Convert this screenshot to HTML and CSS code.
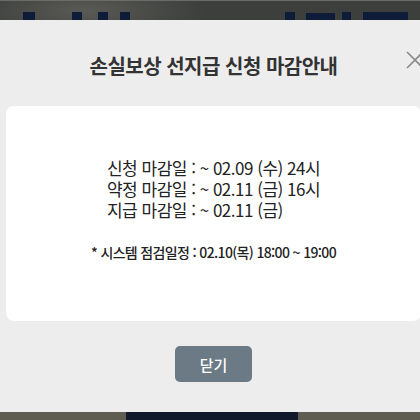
FILE: index.html
```html
<!DOCTYPE html>
<html lang="ko">
<head>
    <meta charset="UTF-8">
    <meta name="viewport" content="width=device-width, initial-scale=1.0">
    <title>손실보상 선지급 신청 마감안내</title>
    <link rel="stylesheet" href="styles.css">
</head>
<body>
    <div class="page">
        <div class="page-top">
            <span class="mark" style="margin-left:23px;width:12px"></span>
            <span class="mark" style="margin-left:37px;width:10px"></span>
            <span class="mark" style="margin-left:16px;width:10px"></span>
            <span class="mark" style="margin-left:12px;width:10px"></span>
            <span class="mark" style="margin-left:155px;width:10px"></span>
            <span class="mark low" style="margin-left:11px;width:29px"></span>
            <span class="mark" style="margin-left:7px;width:9px"></span>
            <span class="mark" style="margin-left:12px;width:45px"></span>
        </div>

        <div class="modal">
            <div class="modal-head">
                <h2>손실보상 선지급 신청 마감안내</h2>
                <button class="close" aria-label="닫기">
                    <svg width="18" height="18" viewBox="0 0 18 18">
                        <path d="M1 1 L17 17 M17 1 L1 17" stroke="#8a8a8a" stroke-width="1.6" fill="none"/>
                    </svg>
                </button>
            </div>

            <div class="card">
                <div class="dates">
                    <p>신청 마감일 : ~ 02.09 (수) 24시</p>
                    <p>약정 마감일 : ~ 02.11 (금) 16시</p>
                    <p>지급 마감일 : ~ 02.11 (금)</p>
                </div>
                <p class="note">* 시스템 점검일정 : 02.10(목) 18:00 ~ 19:00</p>
            </div>

            <div class="modal-foot">
                <button class="btn-close">닫기</button>
            </div>
        </div>

        <div class="page-bottom">
            <span class="olive" style="width:126px"></span>
            <span class="navy" style="width:172px"></span>
            <span class="olive" style="flex:1"></span>
        </div>
    </div>
</body>
</html>
```

FILE: styles.css
```css
body {
    margin: 0;
    padding: 0;
    width: 420px;
    height: 420px;
    overflow: hidden;
    background-color: #3b3d3a;
    font-family: "Noto Sans CJK KR", "Noto Sans", sans-serif;
}

.page {
    width: 420px;
    height: 420px;
    display: flex;
    flex-direction: column;
}

.page-top {
    height: 20px;
    box-sizing: border-box;
    border-top: 1px solid #6b6b68;
    background: radial-gradient(ellipse 120px 30px at 85px 10px, #5a5a55, #3c3f3c);
    display: flex;
    align-items: flex-end;
}

.mark {
    display: block;
    height: 8px;
    background-color: #0e1c3a;
}

.mark.low {
    height: 7px;
}

.modal {
    width: 427px;
    height: 392px;
    box-sizing: border-box;
    padding: 0 6px;
    background-color: #ededed;
    display: flex;
    flex-direction: column;
}

.modal-head {
    position: relative;
    height: 86px;
    box-sizing: border-box;
    padding-top: 31px;
}

.modal-head h2 {
    margin: 0;
    text-align: center;
    font-size: 20px;
    line-height: 29px;
    font-weight: 700;
    color: #333;
    letter-spacing: -0.5px;
}

.close {
    position: absolute;
    left: 400px;
    top: 31px;
    padding: 0;
    border: none;
    background: none;
    width: 18px;
    height: 18px;
    cursor: pointer;
}

.close svg {
    display: block;
}

.card {
    height: 215px;
    box-sizing: border-box;
    padding-top: 51px;
    background-color: #fff;
    border-radius: 8px;
    display: flex;
    flex-direction: column;
    align-items: center;
}

.dates {
    color: #222;
    font-size: 17px;
    line-height: 21px;
    letter-spacing: -0.5px;
}

.dates p {
    margin: 0;
}

.note {
    margin: 22px 0 0;
    color: #222;
    font-size: 14px;
    line-height: 20px;
    font-weight: 500;
    letter-spacing: -0.65px;
}

.modal-foot {
    padding-top: 25px;
    display: flex;
    justify-content: center;
}

.btn-close {
    width: 77px;
    height: 36px;
    border: none;
    border-radius: 5px;
    background-color: #6b7a85;
    color: #fff;
    font-family: inherit;
    font-size: 15px;
    font-weight: 500;
    cursor: pointer;
}

.page-bottom {
    flex: 1;
    display: flex;
}

.olive {
    display: block;
    background-color: #5f5c52;
}

.navy {
    display: block;
    background-color: #101a2c;
}
```
